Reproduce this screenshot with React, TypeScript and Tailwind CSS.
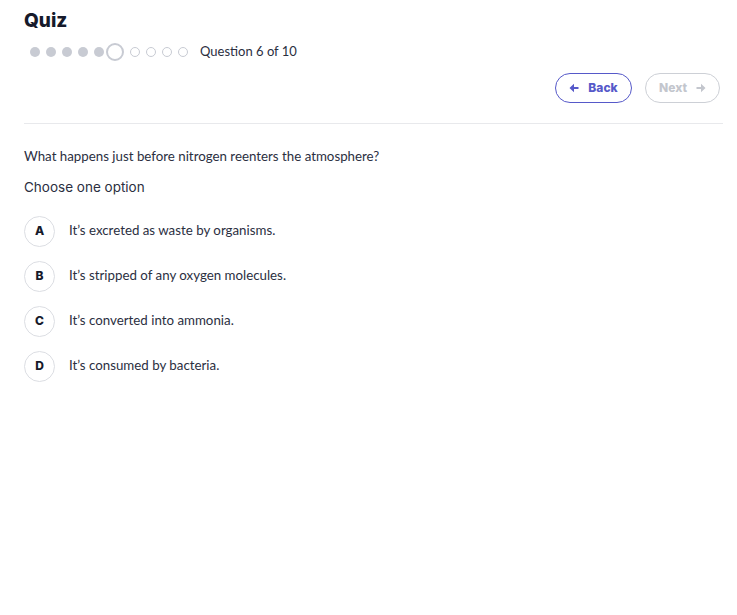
const options = [
  { key: 'A', text: 'It’s excreted as waste by organisms.' },
  { key: 'B', text: 'It’s stripped of any oxygen molecules.' },
  { key: 'C', text: 'It’s converted into ammonia.' },
  { key: 'D', text: 'It’s consumed by bacteria.' },
]

// small solid arrow, points left by default
function Arrow({ flip }: { flip?: boolean }) {
  return (
    <svg width="10" height="10" viewBox="0 0 10 10" className={flip ? 'rotate-180' : ''} fill="currentColor">
      <path d="M0.5 5 L5 0.8 L5 3.9 L9.5 3.9 L9.5 6.1 L5 6.1 L5 9.2 Z" />
    </svg>
  )
}

function Progress({ current, total }: { current: number; total: number }) {
  return (
    <div className="flex items-center pl-[6px]">
      {Array.from({ length: total }).map((_, i) => {
        if (i + 1 < current) return <span key={i} className="mr-[6px] h-[10px] w-[10px] rounded-full bg-[#c8cbd3]" />
        if (i + 1 === current)
          return <span key={i} className="-ml-[4px] mr-[6px] h-[18px] w-[18px] rounded-full border-2 border-[#c8cbd3] bg-white" />
        return <span key={i} className="mr-[6px] h-[10px] w-[10px] rounded-full border border-[#c8cbd3]" />
      })}
      <span className="ml-[6px] text-[13px] text-[#2b2f3f]">Question {current} of {total}</span>
    </div>
  )
}

export default function App() {
  return (
    <main className="min-h-[615px] bg-white pl-6 pr-[14px] pt-[9px] font-['Lato',sans-serif] text-[#2b2f3f]">
      <h1 className="font-['Inter',sans-serif] text-[19px] font-extrabold leading-[24px] text-[#161a2b]">Quiz</h1>
      <div className="mt-[9px]">
        <Progress current={6} total={10} />
      </div>

      <div className="mt-[11px] flex justify-end gap-[13px] pr-[3px]">
        <button className="flex h-[30px] w-[77px] items-center justify-center gap-[9px] rounded-full border border-[#5659c9] font-['Inter',sans-serif] text-[12px] font-extrabold text-[#5659c9]">
          <Arrow />
          Back
        </button>
        <button className="flex h-[30px] w-[75px] items-center justify-center gap-[9px] rounded-full border border-[#cdd0d6] font-['Inter',sans-serif] text-[12px] font-extrabold text-[#c3c6cd]">
          Next
          <Arrow flip />
        </button>
      </div>

      <hr className="mt-[20px] border-t border-[#e8e9ec]" />

      <p className="mt-[23px] text-[13.3px] leading-[18px]">What happens just before nitrogen reenters the atmosphere?</p>
      <p className="mt-[13px] font-['Inter',sans-serif] text-[13.5px] leading-[18px]">Choose one option</p>

      <ul className="mt-[20px] flex flex-col gap-[14px]">
        {options.map((o) => (
          <li key={o.key} className="flex items-center gap-[14px]">
            <span className="flex h-[31px] w-[31px] items-center justify-center rounded-full border border-[#dcdee3] font-['Inter',sans-serif] text-[12px] font-extrabold text-[#161a2b]">
              {o.key}
            </span>
            <span className="text-[13.3px]">{o.text}</span>
          </li>
        ))}
      </ul>
    </main>
  )
}
